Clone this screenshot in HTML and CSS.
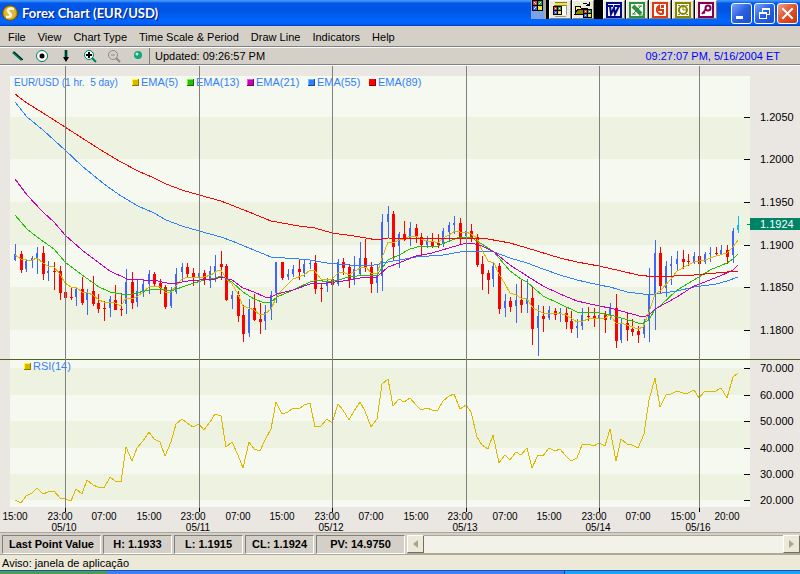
FILE: index.html
```html
<!DOCTYPE html>
<html lang="en">

<head>
    <meta charset="UTF-8">
    <meta name="viewport" content="width=device-width, initial-scale=1.0">
    <title>Forex Chart (EUR/USD)</title>
    <link rel="stylesheet" href="styles.css">
</head>

<body>

    <!-- Title bar -->
    <header class="title-bar">
        <svg class="app-icon" width="16" height="16" viewBox="0 0 16 16">
            <circle cx="8" cy="8" r="7.5" fill="#c89a14" stroke="#6b5108" />
            <circle cx="8" cy="8" r="6" fill="#e0b838" />
            <path d="M12 4C7 2.500 4 5 7 7.500S10 12 4 12" fill="none" stroke="#fffbe0" stroke-width="2.500" />
        </svg>
        <h1>Forex Chart (EUR/USD)</h1>

        <div class="office-bar">
            <button class="office-start" aria-label="Office">
                <svg width="11" height="11" viewBox="0 0 11 11" shape-rendering="crispEdges">
                    <path d="M0 0h11v11H0z" fill="#000" />
                    <path d="M1 1h4v4H1z" fill="#e33" />
                    <path d="M6 1h4v4H6z" fill="#3a3" />
                    <path d="M1 6h4v4H1z" fill="#36f" />
                    <path d="M6 6h4v4H6z" fill="#fd0" />
                    <path d="M2 2h1v1H2zM3 3h1v1H3zM8 2h1v1H8zM7 3h1v1H7zM3 7h1v1H3zM2 8h1v1H2zM7 7h1v1H7zM8 8h1v1H8z" fill="#fff" />
                </svg>
            </button>
            <button class="office-btn" aria-label="New document">
                <svg width="18" height="16" viewBox="0 0 18 16" shape-rendering="crispEdges">
                    <path d="M4 2h11v11H5z" fill="#fff" />
                    <path d="M4 1h12v2H4z" fill="#ffe800" />
                    <path d="M4 0h12v1H4zM3 3h12v1H3z" fill="#777" />
                    <path d="M15 3h1v10h-1zM4 14h11v1H4z" fill="#999" />
                    <path d="M2 4h9v9H2z" fill="#000" />
                    <path d="M3 5h3v3H3z" fill="#e33" />
                    <path d="M7 5h3v3H7z" fill="#3a3" />
                    <path d="M3 9h3v3H3z" fill="#36f" />
                    <path d="M7 9h3v3H7z" fill="#fd0" />
                    <path d="M4 6h1v1H4zM8 6h1v1H8zM4 10h1v1H4zM8 10h1v1H8z" fill="#fff" />
                </svg>
            </button>
            <button class="office-btn" aria-label="Open document">
                <svg width="18" height="16" viewBox="0 0 18 16" shape-rendering="crispEdges">
                    <path d="M1 4h5l1 2h6v6H1z" fill="#fff36a" stroke="#000" />
                    <path d="M1 12l3-5h12l-4 5z" fill="#8a8a00" stroke="#000" />
                    <path d="M9 1h4v1h2V0h1v4h-4V3h1V2H9z" fill="#000" />
                    <path d="M9 7h9v9H9z" fill="#000" />
                    <path d="M10 8h3v3h-3z" fill="#e33" />
                    <path d="M14 8h3v3h-3z" fill="#3a3" />
                    <path d="M10 12h3v3h-3z" fill="#36f" />
                    <path d="M14 12h3v3h-3z" fill="#fd0" />
                    <path d="M11 9h1v1h-1zM15 9h1v1h-1zM11 13h1v1h-1zM15 13h1v1h-1z" fill="#fff" />
                </svg>
            </button>
            <button class="office-btn first" aria-label="Word">
                <svg width="16" height="16" viewBox="0 0 16 16">
                    <path d="M0 0h16v16H0z" fill="#000a8a" />
                    <path d="M2 2h12v12H2z" fill="#f4f4ff" />
                    <path d="M2 4h5M8 4h6M4 4l1 8 3-6 1 6 4-8" fill="none" stroke="#000a8a" stroke-width="2" />
                </svg>
            </button>
            <button class="office-btn" aria-label="Excel">
                <svg width="16" height="16" viewBox="0 0 16 16">
                    <path d="M0 0h16v16H0z" fill="#2f8f3c" />
                    <path d="M2 2h12v12H2z" fill="#fff" />
                    <path d="M4 4l8 8" stroke="#2f8f3c" stroke-width="4" />
                    <path d="M12 4l-8 8M9 4h4M3 12h4M10 13h4" fill="none" stroke="#2f8f3c" stroke-width="1" />
                </svg>
            </button>
            <button class="office-btn" aria-label="PowerPoint">
                <svg width="16" height="16" viewBox="0 0 16 16">
                    <path d="M0 0h16v16H0z" fill="#dc3a14" />
                    <path d="M2 2h12v12H2z" fill="#fff" />
                    <path d="M11 11.500A4 4 0 1 1 7 4v4h4z" fill="none" stroke="#dc3a14" stroke-width="2" />
                    <path d="M9 3h3v3H9z" fill="#dc3a14" />
                </svg>
            </button>
            <button class="office-btn" aria-label="Outlook">
                <svg width="16" height="16" viewBox="0 0 16 16">
                    <path d="M0 0h16v16H0z" fill="#858500" />
                    <path d="M2 2h12v12H2z" fill="#fff" />
                    <circle cx="8" cy="8" r="4" fill="none" stroke="#858500" stroke-width="2" />
                    <path d="M8 5v3h3" fill="none" stroke="#858500" />
                    <path d="M3 3h2v1H3zM11 3h2v1h-2zM3 12h2v1H3zM11 12h2v1h-2z" fill="#858500" />
                </svg>
            </button>
            <button class="office-btn" aria-label="Access">
                <svg width="16" height="16" viewBox="0 0 16 16">
                    <path d="M0 0h16v16H0z" fill="#850055" />
                    <path d="M2 2h12v12H2z" fill="#fff" />
                    <circle cx="10" cy="6" r="2.500" fill="#fff" stroke="#850055" stroke-width="2" />
                    <path d="M8 7l-4 5M5 10l2 1" stroke="#850055" stroke-width="2" />
                </svg>
            </button>
        </div>

        <div class="window-buttons">
            <button class="win-btn" aria-label="Minimize">
                <svg width="19" height="19" viewBox="0 0 19 19"><path d="M4 12h7v3H4z" fill="#fff" /></svg>
            </button>
            <button class="win-btn" aria-label="Restore">
                <svg width="19" height="19" viewBox="0 0 19 19" shape-rendering="crispEdges">
                    <path d="M7 4h8v2H7zM7 4h1v4H7zM14 4h1v7h-1zM12 10h3v1h-3zM4 8h8v2H4zM4 8h1v7H4zM11 8h1v7h-1zM4 14h8v1H4z" fill="#fff" />
                </svg>
            </button>
            <button class="win-btn close" aria-label="Close">
                <svg width="19" height="19" viewBox="0 0 19 19"><path d="M5 5l9 9M14 5l-9 9" stroke="#fff" stroke-width="2" stroke-linecap="square" /></svg>
            </button>
        </div>
    </header>

    <!-- Menu -->
    <nav class="menu">
        <a href="#">File</a>
        <a href="#">View</a>
        <a href="#">Chart Type</a>
        <a href="#">Time Scale &amp; Period</a>
        <a href="#">Draw Line</a>
        <a href="#">Indicators</a>
        <a href="#">Help</a>
    </nav>

    <!-- Tools -->
    <div class="toolbar">
        <div class="tools">
            <button aria-label="Line">
                <svg width="14" height="14" viewBox="0 0 14 14">
                    <path d="M2 3l9 8" stroke="#007d62" stroke-width="3" />
                    <path d="M3 3l9 8" stroke="#000" stroke-width="1" />
                </svg>
            </button>
            <button aria-label="Point">
                <svg width="14" height="14" viewBox="0 0 14 14">
                    <circle cx="7" cy="7" r="5.500" fill="#fff" stroke="#007d62" />
                    <circle cx="7" cy="7" r="2.500" fill="#000" />
                </svg>
            </button>
            <button aria-label="Arrow">
                <svg width="14" height="14" viewBox="0 0 14 14">
                    <path d="M7 1v8" stroke="#007d62" stroke-width="3" />
                    <path d="M7 1v10" stroke="#000" stroke-width="1" />
                    <path d="M4 8h6l-3 5z" fill="#000" />
                </svg>
            </button>
            <button aria-label="Zoom in">
                <svg width="14" height="14" viewBox="0 0 14 14">
                    <circle cx="6" cy="6" r="4.500" fill="#fff" stroke="#007d62" />
                    <path d="M9 9l4 4" stroke="#007d62" stroke-width="2" />
                    <path d="M3 6h6M6 3v6" stroke="#000" stroke-width="2" />
                </svg>
            </button>
            <button aria-label="Zoom out">
                <svg width="14" height="14" viewBox="0 0 14 14">
                    <circle cx="6" cy="6" r="4.500" fill="none" stroke="#8c8c8c" />
                    <path d="M9 9l4 4" stroke="#8c8c8c" stroke-width="2" />
                    <path d="M4 6h4" stroke="#8c8c8c" stroke-width="1" />
                </svg>
            </button>
            <button aria-label="Status">
                <svg width="14" height="14" viewBox="0 0 14 14">
                    <circle cx="7" cy="6" r="4" fill="#12a67c" />
                    <circle cx="6" cy="5" r="1.500" fill="#b8f4e0" />
                </svg>
            </button>
        </div>
        <span class="updated">Updated: 09:26:57 PM</span>
        <span class="clock">09:27:07 PM, 5/16/2004 ET</span>
    </div>

    <!-- Chart, filled in by the script -->
    <main class="chart">
        <svg id="chart" viewBox="0 66 800 466" role="img" aria-label="EUR/USD hourly chart with RSI"></svg>
    </main>

    <!-- Last values -->
    <section class="values">
        <div class="value title">Last Point Value</div>
        <div class="value">H: 1.1933</div>
        <div class="value">L: 1.1915</div>
        <div class="value">CL: 1.1924</div>
        <div class="value wide">PV: 14.9750</div>
        <div class="scroll">
            <button aria-label="Scroll left"><svg width="5" height="8" viewBox="0 0 5 8"><path d="M5 0v8L0 4z" fill="#a8a595" /></svg></button>
            <div class="track"></div>
            <button aria-label="Scroll right"><svg width="5" height="8" viewBox="0 0 5 8"><path d="M0 0v8l5-4z" fill="#a8a595" /></svg></button>
        </div>
    </section>

    <footer class="status">Aviso: janela de aplicação</footer>
    <div class="taskbar">
        <div class="start"></div>
        <div class="tasks"></div>
        <div class="tray"></div>
    </div>

    <script>
        const svg = document.getElementById('chart');
        const START = 15;
        const STEP = 5.5625;

        // high, body top, body bottom, low, direction
        const candles = [
            [244, 254, 260, 261, 'u'], [251, 254, 270, 273, 'd'], [260, 261, 269, 272, 'u'], [256, 258, 260, 268, 'u'],
            [247, 253, 258, 274, 'u'], [246, 253, 274, 280, 'd'], [261, 271, 273, 281, 'u'], [262, 271, 272, 290, 'd'],
            [266, 271, 293, 300, 'd'], [289, 292, 298, 305, 'd'], [287, 297, 298, 300, 'd'], [287, 289, 297, 306, 'u'],
            [277, 289, 303, 305, 'd'], [289, 292, 300, 315, 'u'], [276, 291, 304, 306, 'd'], [294, 303, 309, 313, 'd'],
            [301, 308, 309, 321, 'd'], [296, 299, 308, 317, 'u'], [285, 300, 310, 310, 'd'], [293, 309, 310, 316, 'd'],
            [269, 282, 304, 314, 'u'], [272, 282, 303, 309, 'd'], [279, 291, 302, 307, 'u'], [279, 284, 291, 297, 'u'],
            [270, 274, 284, 294, 'u'], [272, 274, 284, 287, 'd'], [279, 283, 288, 294, 'd'], [285, 287, 307, 309, 'd'],
            [287, 291, 306, 308, 'u'], [268, 274, 292, 294, 'u'], [263, 267, 272, 282, 'u'], [263, 267, 274, 277, 'd'],
            [268, 273, 277, 286, 'd'], [266, 273, 277, 286, 'u'], [270, 273, 280, 285, 'd'], [266, 271, 281, 288, 'u'],
            [255, 266, 272, 282, 'u'], [251, 264, 267, 280, 'd'], [264, 266, 300, 301, 'd'], [291, 295, 299, 309, 'u'],
            [291, 295, 316, 322, 'd'], [305, 315, 334, 342, 'd'], [299, 309, 333, 337, 'u'], [294, 308, 320, 321, 'd'],
            [303, 319, 322, 334, 'd'], [305, 312, 321, 330, 'u'], [291, 295, 310, 320, 'u'], [262, 262, 293, 303, 'u'],
            [262, 262, 278, 280, 'd'], [269, 274, 277, 280, 'u'], [265, 269, 274, 277, 'u'], [260, 269, 272, 280, 'd'],
            [259, 264, 273, 277, 'u'], [261, 263, 264, 269, 'u'], [255, 263, 289, 294, 'd'], [283, 288, 289, 302, 'd'],
            [278, 281, 286, 292, 'u'], [273, 279, 285, 286, 'd'], [259, 262, 284, 286, 'u'], [258, 262, 268, 275, 'd'],
            [264, 267, 280, 288, 'd'], [256, 269, 279, 285, 'u'], [242, 258, 274, 276, 'u'], [239, 258, 268, 272, 'd'],
            [262, 267, 284, 293, 'd'], [264, 276, 283, 293, 'u'], [214, 222, 276, 291, 'u'], [206, 214, 222, 238, 'u'],
            [211, 214, 247, 260, 'd'], [232, 234, 246, 268, 'u'], [221, 234, 240, 241, 'd'], [222, 228, 238, 246, 'u'],
            [224, 228, 237, 243, 'd'], [233, 237, 245, 257, 'd'], [236, 241, 245, 248, 'u'], [233, 241, 246, 248, 'd'],
            [234, 243, 245, 248, 'd'], [228, 231, 244, 247, 'u'], [222, 225, 232, 242, 'u'], [216, 223, 225, 234, 'u'],
            [218, 223, 237, 244, 'd'], [223, 231, 236, 240, 'u'], [224, 231, 238, 242, 'd'], [234, 237, 265, 267, 'd'],
            [256, 264, 274, 290, 'd'], [270, 273, 280, 294, 'd'], [262, 266, 279, 287, 'u'], [263, 266, 309, 314, 'd'],
            [294, 301, 308, 317, 'u'], [297, 301, 307, 312, 'd'], [284, 300, 306, 323, 'u'], [280, 300, 305, 313, 'd'],
            [279, 298, 304, 313, 'u'], [286, 298, 329, 345, 'd'], [305, 316, 328, 356, 'u'], [306, 316, 319, 332, 'd'],
            [306, 310, 318, 320, 'u'], [308, 311, 315, 320, 'd'], [308, 312, 313, 322, 'u'], [307, 313, 322, 329, 'd'],
            [311, 321, 329, 333, 'd'], [319, 326, 328, 338, 'u'], [308, 315, 326, 330, 'u'], [307, 316, 317, 321, 'd'],
            [308, 316, 318, 327, 'd'], [310, 315, 318, 323, 'u'], [311, 315, 320, 333, 'd'], [303, 308, 314, 320, 'u'],
            [294, 308, 341, 348, 'd'], [319, 323, 340, 343, 'u'], [313, 323, 330, 341, 'd'], [319, 329, 332, 336, 'd'],
            [326, 331, 335, 343, 'd'], [319, 322, 334, 338, 'u'], [268, 295, 321, 342, 'u'], [240, 253, 294, 330, 'u'],
            [247, 253, 286, 293, 'd'], [261, 266, 288, 297, 'u'], [256, 264, 266, 285, 'u'], [251, 259, 264, 270, 'u'],
            [250, 259, 262, 269, 'd'], [254, 261, 262, 266, 'd'], [252, 256, 262, 264, 'u'], [256, 256, 264, 267, 'd'],
            [252, 254, 262, 264, 'u'], [247, 253, 254, 262, 'u'], [247, 253, 254, 256, 'd'], [245, 250, 254, 255, 'u'],
            [245, 250, 257, 264, 'd'], [228, 231, 255, 263, 'u'], [216, 225, 230, 233, 'now']
        ];

        const rsi = [
            500, 503, 496, 493, 488, 494, 492, 491, 498, 499, 501, 489, 494, 480, 485, 487, 488, 477, 481, 482,
            447, 461, 448, 441, 432, 439, 442, 456, 442, 424, 419, 423, 427, 424, 430, 422, 414, 416, 447, 442,
            455, 468, 442, 449, 451, 440, 429, 402, 414, 412, 408, 409, 405, 403, 427, 426, 419, 423, 404, 410,
            420, 411, 402, 411, 427, 419, 384, 379, 406, 399, 402, 398, 405, 410, 408, 410, 410, 401, 396, 394,
            409, 405, 412, 437, 445, 449, 435, 463, 455, 460, 452, 455, 448, 468, 455, 456, 448, 451, 449, 456,
            461, 458, 445, 444, 446, 443, 446, 429, 461, 439, 444, 445, 448, 434, 400, 378, 407, 395, 394, 391,
            393, 393, 390, 398, 391, 391, 391, 388, 398, 377, 373
        ];

        // Moving averages as point lists
        const averages = [
            { color: '#2f7fff', points: '15,102 27,117 43,130 65,150 82,166 104,184 121,196 138,206 154,213 166,220 182,226 199,231 221,237 232,241 249,248 271,257 299,259 310,260 327,263 338,264 349,265 374,265 388,262 399,260 416,257 443,255 466,251 477,251 494,252 510,258 527,263 543,269 560,275 577,280 599,285 610,287 627,292 643,294 655,294 677,291 694,287 716,284 727,281 738,277' },
            { color: '#d9b800', points: '15,255 21,259 27,260 32,260 37,258 43,263 48,266 54,267 60,274 65,283 71,287 77,288 82,292 88,293 93,295 99,300 104,302 115,303 121,306 126,298 132,299 138,296 143,292 149,287 154,286 160,287 165,292 171,292 176,286 182,279 188,277 204,277 211,275 217,271 221,270 227,280 232,284 238,294 243,306 249,308 254,310 260,315 265,314 271,309 277,296 282,290 293,279 304,275 310,270 315,271 321,279 327,280 332,279 338,273 343,272 349,275 360,268 366,267 371,273 377,274 382,258 388,242 393,243 399,240 404,239 410,236 416,236 421,239 427,241 432,241 438,243 443,238 449,235 455,231 460,232 466,232 471,234 477,238 482,250 488,261 494,263 499,274 505,284 510,293 516,295 521,298 527,299 533,308 543,313 558,313 566,315 577,322 583,321 588,319 599,318 605,318 610,315 616,323 621,323 627,325 638,329 643,327 649,312 655,294 660,291 671,279 677,271 688,265 694,262 705,260 716,256 727,253 733,247 738,240' },
            { color: '#27bd0b', points: '15,215 27,229 37,237 54,249 65,262 82,275 99,287 110,292 121,294 132,294 149,290 160,289 171,291 188,285 204,280 215,278 221,276 232,282 243,292 254,299 265,303 271,302 277,297 293,290 310,282 318,280 327,282 338,280 349,277 366,275 377,275 388,260 399,255 410,249 421,246 438,246 449,241 460,237 472,238 482,244 494,252 510,271 521,279 527,282 543,296 560,304 577,312 599,313 610,315 621,318 632,321 638,323 643,323 649,320 655,309 660,306 677,290 694,280 710,270 727,263 733,259 738,254' },
            { color: '#c700b8', points: '15,179 27,195 43,212 54,222 65,235 82,250 99,263 110,271 127,279 143,280 158,281 171,284 188,281 199,280 215,279 221,277 232,280 243,288 254,292 265,297 271,297 277,294 293,290 310,284 327,283 343,281 360,278 377,277 388,267 399,263 416,256 432,253 449,248 466,243 472,243 482,246 494,252 510,265 527,276 543,286 560,294 577,301 599,306 610,308 621,311 632,314 643,317 649,315 655,309 677,297 694,286 710,280 727,273 733,270 738,265' },
            { color: '#ff0000', points: '15,94 27,103 43,113 65,127 82,138 104,152 121,162 138,171 154,178 166,184 182,190 199,195 221,201 249,212 271,221 299,226 315,228 332,233 354,236 366,238 377,240 388,238 443,239 466,238 488,239 510,243 527,248 560,258 577,262 599,266 621,271 638,275 655,277 694,275 716,273 738,271' }
        ];

        const candleColors = { u: '#4064ff', d: '#ff0000', now: '#00c0f0' };

        function add(tag, attrs, text) {
            const node = document.createElementNS('http://www.w3.org/2000/svg', tag);
            for (const key in attrs) node.setAttribute(key, attrs[key]);
            if (text !== undefined) node.textContent = text;
            svg.appendChild(node);
        }

        function box(x, y, width, height, fill) {
            add('rect', { x, y, width, height, fill });
        }

        // Plot background and bands
        box(10, 76, 740, 431, '#f6f9f0');
        [[117, 42], [202, 43], [287, 43], [368, 27], [421, 27], [474, 26]].forEach(function (band) {
            box(10, band[0], 740, band[1], '#eef2e1');
        });
        box(0, 359, 800, 1, '#4d6326');

        // Legend
        [[132, 'EMA(5)', '#d9b800', '#ffff00', '#8f7a00'], [187, 'EMA(13)', '#27bd0b', '#6aff30', '#147000'],
        [247, 'EMA(21)', '#c700b8', '#f050e8', '#780070'], [308, 'EMA(55)', '#2f7fff', '#60c0ff', '#1c4c9c'],
        [369, 'EMA(89)', '#ff0000', '#ff0000', '#980000']].forEach(function (item) {
            legend(item[0], 79, item[1], item[2], item[3], item[4]);
        });
        add('text', { x: 14, y: 86, class: 'legend pair' }, 'EUR/USD (1 hr.\u00a0 5 day)');
        legend(24, 363, 'RSI(14)', '#d9b800', '#ffff00', '#8f7a00');

        function legend(x, y, label, fill, light, dark) {
            box(x, y, 7, 7, dark);
            box(x, y, 6, 6, light);
            box(x + 1, y + 1, 5, 5, fill);
            add('text', { x: x + 9, y: y + 7, class: 'legend' }, label);
        }

        candles.forEach(function (c, i) {
            const x = Math.round(START + i * STEP);
            const color = candleColors[c[4]];
            box(x, c[0], 1, c[3] - c[0], color);
            box(x - 1, c[1], c[4] === 'd' ? 3 : 2, c[2] - c[1], color);
        });

        averages.forEach(function (line) {
            add('polyline', { points: line.points, stroke: line.color, class: 'line' });
        });
        add('polyline', {
            points: rsi.map((y, i) => Math.round(START + i * STEP) + ',' + y).join(' '),
            stroke: '#d9b800',
            class: 'line'
        });

        // Day lines
        [[65, '05/10'], [199, '05/11'], [332, '05/12'], [466, '05/13'], [599, '05/14'], [699, '05/16']].forEach(function (day) {
            box(day[0], 66, 1, 442, '#808080');
            box(day[0], 508, 1, 4, '#000');
            add('text', { x: day[0] - 1, y: 531, class: 'time' }, day[1]);
        });

        // Hours
        [[15, '15:00'], [60, '23:00'], [104, '07:00'], [149, '15:00'], [193, '23:00'], [238, '07:00'], [282, '15:00'],
        [327, '23:00'], [371, '07:00'], [416, '15:00'], [460, '23:00'], [505, '07:00'], [549, '15:00'], [594, '23:00'],
        [638, '07:00'], [683, '15:00'], [727, '20:00']].forEach(function (hour) {
            add('text', { x: hour[0], y: 520, class: 'time' }, hour[1]);
        });

        // Value axes
        [[117, '1.2050'], [159, '1.2000'], [202, '1.1950'], [245, '1.1900'], [287, '1.1850'], [330, '1.1800'],
        [368, '70.000'], [395, '60.000'], [421, '50.000'], [448, '40.000'], [474, '30.000'], [500, '20.000']].forEach(function (tick) {
            box(744, tick[0], 6, 1, '#000');
            add('text', { x: 760, y: tick[0] + 4, class: 'axis' }, tick[1]);
        });

        // Current price
        box(747, 224, 3, 1, '#008468');
        box(750, 218, 50, 12, '#008468');
        add('text', { x: 760, y: 228, class: 'axis current' }, '1.1924');
    </script>

</body>

</html>
```

FILE: styles.css
```css
* {
    box-sizing: border-box;
}

body {
    margin: 0;
    background: #ece9d8;
    color: #000;
    font: 11px/16px "Liberation Sans", Arial, sans-serif;
}

button {
    display: flex;
    align-items: center;
    justify-content: center;
    padding: 0;
    border: none;
    background: none;
}

svg {
    display: block;
}

/* Title bar */
.title-bar {
    display: flex;
    align-items: center;
    height: 26px;
    padding: 0 2px;
    background: linear-gradient(#3f94ff 0, #3f94ff 1px, #0458e8 3px, #0054e3 40%, #0066ff 80%, #0062f4 92%, #003cc0 100%);
}

.title-bar h1 {
    flex: 1;
    margin: 0 0 0 4px;
    color: #fff;
    font: bold 13px/20px Lato, "Trebuchet MS", sans-serif;
    text-shadow: 1px 1px 1px #0a1883;
    white-space: nowrap;
}

/* Office shortcuts */
.office-bar {
    display: flex;
    align-self: flex-start;
    height: 19px;
    margin-right: 14px;
    background: #000;
}

.office-start {
    align-items: flex-start;
    width: 15px;
    margin-right: 3px;
    border-right: 2px solid #aca899;
    background: #7ba2e7;
}

.office-btn {
    width: 22px;
    margin-right: 1px;
    border: 1px solid;
    border-color: #fff #808080 #808080 #fff;
    background: #ece9d8;
}

.office-btn.first {
    margin-left: 8px;
}

.office-btn:last-child {
    margin-right: 0;
}

/* Minimize, restore, close */
.window-buttons {
    display: flex;
    gap: 2px;
}

.win-btn {
    width: 21px;
    height: 21px;
    border: 1px solid #fff;
    border-radius: 3px;
    background: linear-gradient(135deg, #7aa4f8, #2a5fe0 50%, #1c4ed0);
}

.win-btn.close {
    background: linear-gradient(135deg, #f0a088, #e0502c 50%, #c8380c);
}

/* Menu */
.menu {
    display: flex;
    gap: 12px;
    height: 22px;
    padding: 3px 8px;
    border-bottom: 1px solid #fff;
    background: #d4d0c8;
    box-shadow: inset 0 -1px #808080;
}

.menu a {
    color: #000;
    text-decoration: none;
    white-space: nowrap;
}

/* Toolbar */
.toolbar {
    display: flex;
    align-items: center;
    gap: 4px;
    height: 18px;
    padding: 0 20px 2px 11px;
    border-bottom: 1px solid #fff;
    background: #d4d0c8;
    box-shadow: inset 0 -1px #808080;
    white-space: nowrap;
}

.tools {
    display: flex;
    gap: 10px;
}

.updated {
    padding-left: 5px;
    border-left: 1px solid #808080;
}

.clock {
    margin-left: auto;
    color: #0000ff;
}

/* Chart */
.chart {
    background: #eae7e2;
}

.chart svg {
    width: 100%;
    height: auto;
    shape-rendering: crispEdges;
    font: 11px "Liberation Sans", Arial, sans-serif;
}

.line {
    fill: none;
    stroke-width: 1;
}

.legend {
    fill: #2f7fff;
}

.pair {
    font-size: 10px;
}

.time {
    font-size: 10px;
    text-anchor: middle;
}

.current {
    fill: #fff;
}

/* Last values */
.values {
    display: flex;
    gap: 2px;
    height: 22px;
    padding: 2px 0 0 2px;
    border-top: 1px solid #aca899;
    background: #d4d0c8;
    font-weight: bold;
    text-align: center;
    white-space: nowrap;
}

.value {
    width: 69px;
    border: 1px solid;
    border-color: #808080 #fff #fff #808080;
}

.value.title {
    width: 99px;
}

.value.wide {
    width: 89px;
}

/* Scroll bar */
.scroll {
    display: flex;
    flex: 1;
    border-bottom: 1px solid #aca899;
    background: #f3f2e8;
}

.scroll button {
    width: 17px;
    border: 1px solid;
    border-color: #fff #716f64 #716f64 #fff;
    background: #ece9d8;
}

.track {
    flex: 1;
    border-top: 1px solid #aca899;
}

/* Status line and the top of the taskbar */
.status {
    height: 16px;
    padding-left: 2px;
    border-top: 1px solid #aca899;
}

.taskbar {
    display: flex;
    height: 4px;
    border-top: 1px solid #1c4fc0;
}

.start {
    width: 107px;
    background: #4aa04a;
}

.tasks {
    flex: 1;
    background: #3a80f0;
}

.tray {
    width: 236px;
    border-left: 1px solid #093c90;
    background: #14a4f0;
}
```
